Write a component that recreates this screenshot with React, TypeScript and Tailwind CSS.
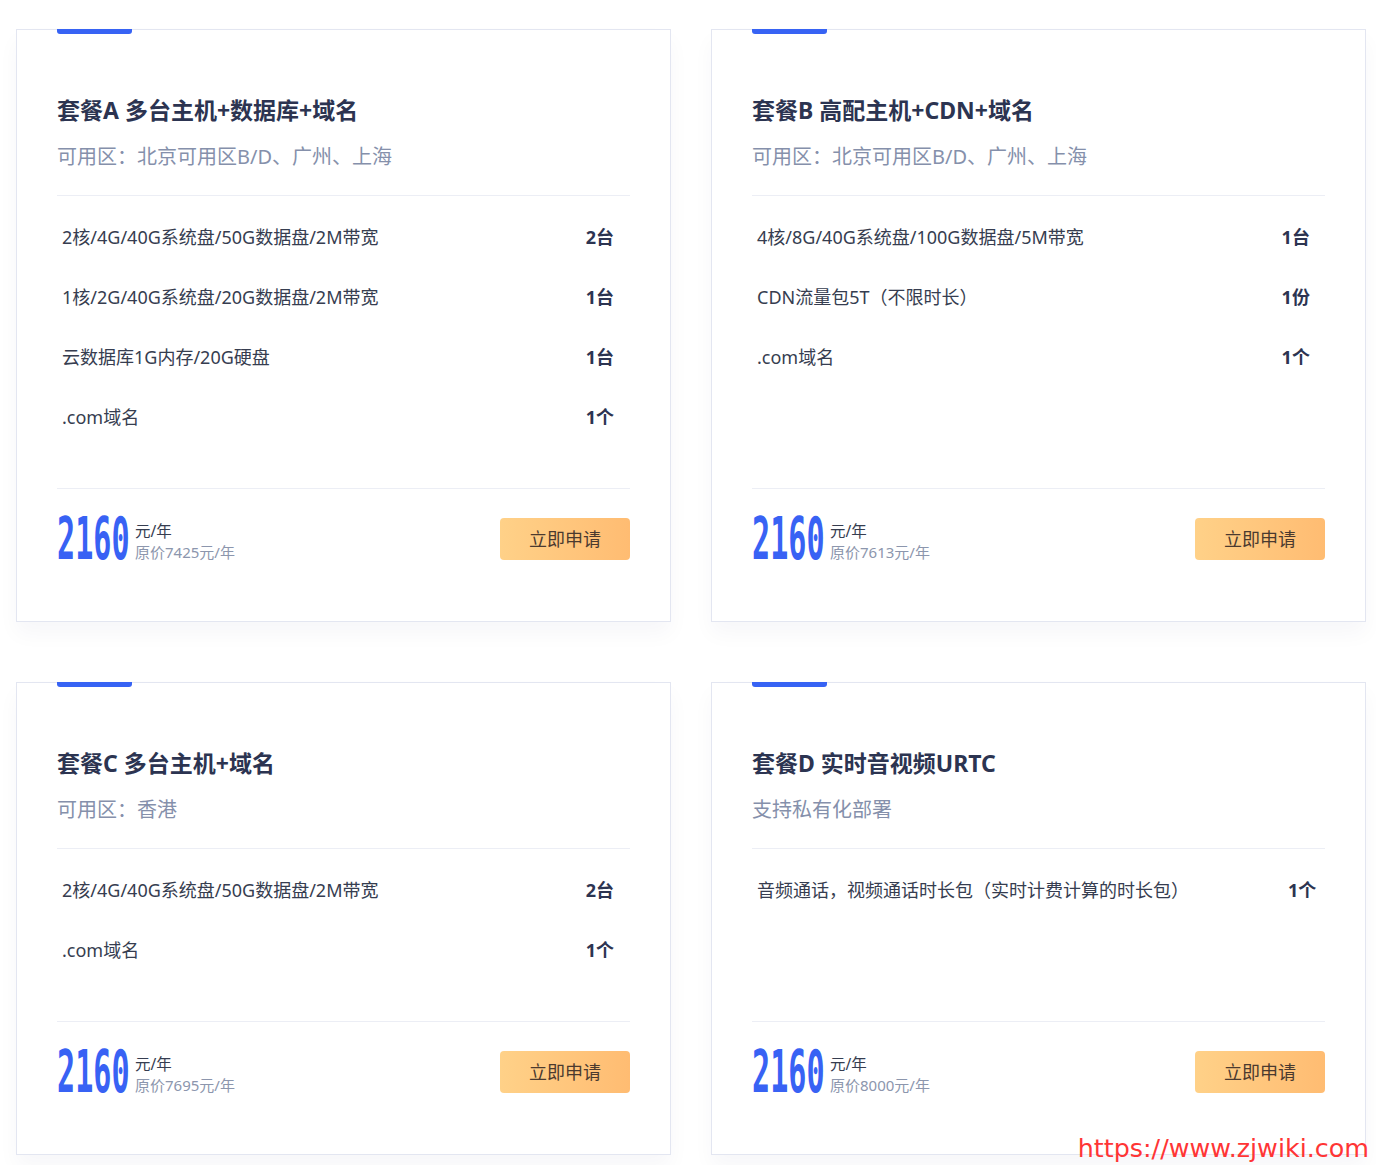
const plans = [
  {
    title: "套餐A 多台主机+数据库+域名",
    sub: "可用区：北京可用区B/D、广州、上海",
    items: [
      ["2核/4G/40G系统盘/50G数据盘/2M带宽", "2台"],
      ["1核/2G/40G系统盘/20G数据盘/2M带宽", "1台"],
      ["云数据库1G内存/20G硬盘", "1台"],
      [".com域名", "1个"],
    ],
    origin: "7425",
  },
  {
    title: "套餐B 高配主机+CDN+域名",
    sub: "可用区：北京可用区B/D、广州、上海",
    items: [
      ["4核/8G/40G系统盘/100G数据盘/5M带宽", "1台"],
      ["CDN流量包5T（不限时长）", "1份"],
      [".com域名", "1个"],
    ],
    origin: "7613",
  },
  {
    title: "套餐C 多台主机+域名",
    sub: "可用区：香港",
    items: [
      ["2核/4G/40G系统盘/50G数据盘/2M带宽", "2台"],
      [".com域名", "1个"],
    ],
    origin: "7695",
  },
  {
    title: "套餐D 实时音视频URTC",
    sub: "支持私有化部署",
    items: [["音频通话，视频通话时长包（实时计费计算的时长包）", "1个"]],
    origin: "8000",
  },
];

type Plan = (typeof plans)[number];

function PlanCard({ plan }: { plan: Plan }) {
  return (
    <div className="relative flex flex-col border border-[#e3e6f1] bg-white px-10 pt-[65px] shadow-[0_12px_20px_rgba(30,40,80,0.035)]">
      {/* 顶部蓝条 */}
      <div className="absolute -top-px left-10 h-[5px] w-[75px] rounded-b-[3px] bg-[#3763f4]" />

      <h2 className="text-[23px] font-bold leading-[30px] text-[#2c3451]">{plan.title}</h2>
      <p className="mt-[18px] border-b border-[#eceef5] pb-[24px] text-[20px] leading-[28px] text-[#8590ab]">
        {plan.sub}
      </p>

      <div className="mt-[11px] mb-[41px] flex-1">
        <table className="w-full border-collapse">
          <tbody>
            {plan.items.map(([name, qty]) => (
              <tr key={name} className="h-[60px]">
                <td className="px-[5px] text-[18px] text-[#363d50]">{name}</td>
                <td className="px-[5px] text-center text-[18px] font-bold text-[#2c3451]">{qty}</td>
              </tr>
            ))}
          </tbody>
        </table>
      </div>

      <div className="flex h-[42px] box-content items-center justify-between border-t border-[#eceef5] pt-[29px] pb-[61px]">
        <div className="flex items-center">
          <div className="h-[42px] w-[70px] overflow-visible">
            <span className="inline-block origin-left scale-x-[0.52] font-['DejaVu_Sans_Mono',monospace] text-[58px] font-bold leading-[42px] text-[#3862f4]">
              2160
            </span>
          </div>
          <div className="ml-2 flex translate-y-[3px] flex-col leading-[21px]">
            <span className="text-[15.5px] text-[#363d50]">元/年</span>
            <span className="text-[15px] text-[#8c96ad]">原价{plan.origin}元/年</span>
          </div>
        </div>
        <button className="h-[42px] w-[130px] rounded-[4px] bg-linear-to-r from-[#ffd188] to-[#ffbc72] text-[18px] text-[#4b3a2f]">
          立即申请
        </button>
      </div>
    </div>
  );
}

export default function App() {
  return (
    <div className="relative min-h-[1165px] bg-white font-['Noto_Sans','Noto_Sans_CJK_SC',sans-serif]">
      <div className="grid grid-cols-[655px_655px] gap-x-10 gap-y-[60px] pl-4 pt-[29px]">
        {plans.map((p) => (
          <PlanCard key={p.title} plan={p} />
        ))}
      </div>
      <div className="absolute right-[7px] top-[1133px] font-['DejaVu_Sans',sans-serif] text-[25.4px] leading-[30px] text-[#ff3535]">
        https://www.zjwiki.com
      </div>
    </div>
  );
}
